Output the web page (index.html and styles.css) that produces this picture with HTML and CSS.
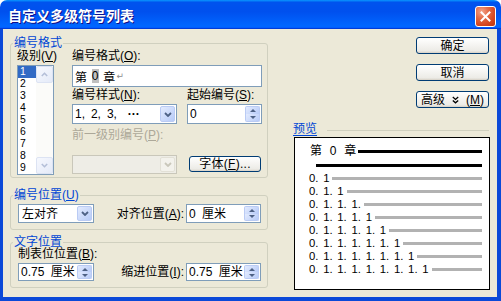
FILE: index.html
```html
<!DOCTYPE html>
<html lang="zh">
<head>
<meta charset="utf-8">
<title>自定义多级符号列表</title>
<link rel="stylesheet" href="styles.css">
</head>
<body>
<div class="window">
  <div class="titlebar">
    <span class="title">自定义多级符号列表</span>
    <span class="close"><svg width="11" height="11" viewBox="0 0 11 11"><path d="M1.5 1.5L9.5 9.5M9.5 1.5L1.5 9.5" stroke="#fff" stroke-width="2" stroke-linecap="square"/></svg></span>
  </div>
  <div class="client">
    <div class="leftcol">
      <fieldset class="group g1">
        <legend>编号格式</legend>
        <div class="g1body">
          <div class="levelcol">
            <div class="label">级别(<u>V</u>)</div>
            <div class="listbox">
              <ul class="items">
                <li class="sel">1</li><li>2</li><li>3</li><li>4</li><li>5</li><li>6</li><li>7</li><li>8</li><li>9</li>
              </ul>
              <div class="vscroll">
                <span class="sb"><svg width="7" height="5" viewBox="0 0 7 5"><polyline points="0.8,4 3.5,1.3 6.2,4" fill="none" stroke="#B4BFD8" stroke-width="1.6"/></svg></span>
                <span class="sb"><svg width="7" height="5" viewBox="0 0 7 5"><polyline points="0.8,1 3.5,3.7 6.2,1" fill="none" stroke="#B4BFD8" stroke-width="1.6"/></svg></span>
              </div>
            </div>
          </div>
          <div class="formatcol">
            <div class="label">编号格式(<u>O</u>):</div>
            <div class="edit fmt">第 <span class="fld">0</span> 章<span class="ret">↵</span></div>
            <div class="pair">
              <div class="label">编号样式(<u>N</u>):</div>
              <div class="label">起始编号(<u>S</u>):</div>
              <div class="combo h20"><span class="val">1, 2, 3, <span class="dots">···</span></span><span class="dd"><svg width="8" height="5" viewBox="0 0 8 5"><polyline points="1,1 4,4 7,1" fill="none" stroke="#4D6185" stroke-width="1.8"/></svg></span></div>
              <div class="spin h20"><span class="val">0</span><span class="spinbtns"><i class="sup"></i><i class="sdn"></i></span></div>
            </div>
            <div class="label disabled">前一级别编号(<u>P</u>):</div>
            <div class="pair2">
              <div class="combo h19 off"><span class="val"></span><span class="dd"><svg width="8" height="5" viewBox="0 0 8 5"><polyline points="1,1 4,4 7,1" fill="none" stroke="#C9C7BA" stroke-width="1.8"/></svg></span></div>
              <span class="btn fontbtn">字体(<u>F</u>)...</span>
            </div>
          </div>
        </div>
      </fieldset>

      <fieldset class="group g2">
        <legend>编号位置(<u>U</u>)</legend>
        <div class="g2body">
          <div class="combo h19"><span class="val pl3">左对齐</span><span class="dd"><svg width="8" height="5" viewBox="0 0 8 5"><polyline points="1,1 4,4 7,1" fill="none" stroke="#4D6185" stroke-width="1.8"/></svg></span></div>
          <div class="label rlabel">对齐位置(<u>A</u>):</div>
          <div class="spin h19"><span class="val ws">0 厘米</span><span class="spinbtns"><i class="sup"></i><i class="sdn"></i></span></div>
        </div>
      </fieldset>

      <fieldset class="group g3">
        <legend>文字位置</legend>
        <div class="g3body">
          <div class="label l12 span3">制表位位置(<u>B</u>):</div>
          <div class="spin h18"><span class="val ws">0.75 厘米</span><span class="spinbtns"><i class="sup"></i><i class="sdn"></i></span></div>
          <div class="label rlabel">缩进位置(<u>I</u>):</div>
          <div class="spin h18"><span class="val ws">0.75 厘米</span><span class="spinbtns"><i class="sup"></i><i class="sdn"></i></span></div>
        </div>
      </fieldset>
    </div>

    <div class="rightcol">
      <span class="btn rbtn">确定</span>
      <span class="btn rbtn mt10">取消</span>
      <span class="btn rbtn mt10 more"><span>高级</span><svg width="7" height="8" viewBox="0 0 7 8"><polyline points="0.8,1 3.5,3.4 6.2,1" fill="none" stroke="#000" stroke-width="1.3"/><polyline points="0.8,4.4 3.5,6.8 6.2,4.4" fill="none" stroke="#000" stroke-width="1.3"/></svg><span>(<u>M</u>)</span></span>
      <div class="ptitle"><span>预览</span><i></i></div>
      <div class="preview">
        <div class="phead"><span>第 0 章</span><i class="bline"></i></div>
        <i class="bline b2"></i>
        <div class="prows">
          <div class="prow"><span>0. 1</span><i></i></div>
          <div class="prow"><span>0. 1. 1</span><i></i></div>
          <div class="prow"><span>0. 1. 1. 1.</span><i></i></div>
          <div class="prow"><span>0. 1. 1. 1. 1</span><i></i></div>
          <div class="prow"><span>0. 1. 1. 1. 1. 1</span><i></i></div>
          <div class="prow"><span>0. 1. 1. 1. 1. 1. 1</span><i></i></div>
          <div class="prow"><span>0. 1. 1. 1. 1. 1. 1. 1</span><i></i></div>
          <div class="prow"><span>0. 1. 1. 1. 1. 1. 1. 1. 1</span><i></i></div>
        </div>
      </div>
    </div>
  </div>
</div>
</body>
</html>
```

FILE: styles.css
```css
* { box-sizing: border-box; }
html, body { margin: 0; padding: 0; }
body {
  width: 501px;
  height: 301px;
  overflow: hidden;
  background: #ffffff;
  font-family: "Liberation Sans", "Noto Sans CJK SC", sans-serif;
  font-size: 12px;
  color: #000;
}
u { text-decoration: underline; text-underline-offset: 1px; }

.window { width: 501px; height: 301px; display: flex; flex-direction: column; }

.titlebar {
  height: 29px;
  flex: none;
  display: flex;
  align-items: center;
  justify-content: space-between;
  padding: 1px 5px 0 8px;
  border-radius: 7px 7px 0 0;
  background: linear-gradient(180deg, #0997ff, #0053ee 8%, #0050ee 40%, #0066ff 88%, #0066ff 93%, #005bff 95%, #003dd7 96%, #003dd7);
}
.title {
  color: #fff;
  font-family: "Noto Sans CJK SC", sans-serif;
  font-weight: bold;
  font-size: 14px;
  line-height: 16px;
  text-shadow: 1px 1px #0f1089;
}
.close {
  width: 21px;
  height: 21px;
  margin-top: 2px;
  border: 1px solid #fff;
  border-radius: 3px;
  background: radial-gradient(circle at 30% 25%, #f4a68c 0, #e36a46 35%, #d4451f 70%, #b83613 100%);
  display: flex;
  align-items: center;
  justify-content: center;
}

.client {
  flex: 1;
  display: flex;
  column-gap: 25px;
  background: #ECE9D8;
  border-style: solid;
  border-color: #0B49D8;
  border-width: 0 4px 4px 3px;
  padding: 8px 7px 0 7px;
}

.leftcol { width: 258px; display: flex; flex-direction: column; }
.rightcol { width: 197px; display: flex; flex-direction: column; }

.group {
  margin: 0;
  padding: 0;
  border: 1px solid #D0D0BF;
  border-radius: 3px;
  min-inline-size: 0;
}
.group legend {
  margin-left: 2px;
  padding: 0 1px;
  color: #0046D5;
  line-height: 12px;
  font-size: 12px;
}
.g2 { margin-top: 11px; }
.g3 { margin-top: 6px; }

.label { line-height: 14px; height: 14px; white-space: nowrap; }
.l12 { line-height: 12px; height: 12px; }
.disabled { color: #ACA899; }

/* group 1 */
.g1body { display: flex; column-gap: 18px; padding: 0 5px 2px 6px; }
.levelcol { width: 37px; display: flex; flex-direction: column; row-gap: 2px; }
.formatcol { width: 190px; display: flex; flex-direction: column; }

.listbox {
  height: 110px;
  display: flex;
  border: 1px solid #7F9DB9;
  background: #fff;
}
.items { list-style: none; margin: 0; padding: 0; flex: 1; }
.items li { height: 12px; line-height: 12px; font-size: 10.4px; padding-left: 2px; overflow: hidden; }
.items li.sel { background: #316AC5; color: #fff; }
.vscroll {
  width: 17px;
  display: flex;
  flex-direction: column;
  justify-content: space-between;
  background: #FBFBF9;
}
.sb {
  height: 17px;
  border: 1px solid #DCE3F3;
  border-radius: 2px;
  background: linear-gradient(135deg, #F6F8FE, #E4EAF8);
  display: flex;
  align-items: center;
  justify-content: center;
}

.edit {
  border: 1px solid #7F9DB9;
  background: #fff;
  display: flex;
  align-items: center;
  white-space: pre;
}
.fmt { height: 22px; margin-top: 2px; padding-left: 2px; word-spacing: 1.5px; }
.fld { background: #C0C0C0; word-spacing: 0; }
.ret { color: #8C8C8C; font-family: "DejaVu Sans", sans-serif; font-size: 9px; margin-left: 1px; }

.pair {
  margin-top: 1px;
  display: grid;
  grid-template-columns: 105px 75px;
  column-gap: 10px;
  row-gap: 2px;
}
.formatcol > .disabled { margin-top: 4px; }
.pair2 {
  margin-top: 13px;
  display: grid;
  grid-template-columns: 105px 75px;
  column-gap: 10px;
  align-items: start;
}

.combo, .spin {
  border: 1px solid #7F9DB9;
  background: #fff;
  display: flex;
  align-items: center;
  white-space: nowrap;
  overflow: hidden;
}
.h20 { height: 20px; }
.h19 { height: 19px; }
.h18 { height: 18px; }
.val { flex: 1; padding-left: 2px; line-height: 14px; }
.pl3 { padding-left: 3px; }
.ws { word-spacing: 3px; }
.combo .val { word-spacing: 2.6px; }
.dots { margin-left: 5px; letter-spacing: 0; font-weight: bold; }
.dd {
  width: 15px;
  align-self: stretch;
  margin: 1px;
  border: 1px solid #BACBF4;
  border-radius: 2px;
  background: linear-gradient(135deg, #E3EBFE, #B7CBF8);
  display: flex;
  align-items: center;
  justify-content: center;
}
.off { border-color: #C9C7BA; background: #EEEDE6; }
.off .dd { border-color: #E2E0D6; background: #F3F2EC; }

.spinbtns {
  width: 15px;
  align-self: stretch;
  margin: 1px;
  display: flex;
  flex-direction: column;
}
.spinbtns i {
  flex: 1;
  border: 1px solid #BACBF4;
  background: linear-gradient(135deg, #E3EBFE, #B7CBF8);
  display: flex;
  align-items: center;
  justify-content: center;
}
.spinbtns .sup { border-radius: 2px 2px 0 0; border-bottom-width: 0; }
.spinbtns .sdn { border-radius: 0 0 2px 2px; border-top-width: 0; }
.sup::after {
  content: "";
  border-left: 3px solid transparent;
  border-right: 3px solid transparent;
  border-bottom: 3px solid #4D6185;
}
.sdn::after {
  content: "";
  border-left: 3px solid transparent;
  border-right: 3px solid transparent;
  border-top: 3px solid #4D6185;
}

.btn {
  height: 17px;
  border: 1px solid #003C74;
  border-radius: 3px;
  background: linear-gradient(180deg, #ffffff, #ecebe6 86%, #d6d0c5);
  display: flex;
  align-items: center;
  justify-content: center;
  line-height: 14px;
  white-space: nowrap;
}
.fontbtn { width: 72px; height: 16px; margin: 1px 0 0 2px; letter-spacing: 0.3px; }
.rbtn { width: 73px; align-self: flex-end; margin-right: 1px; }
.mt10 { margin-top: 10px; }
.more { column-gap: 7px; }

/* group 2 / 3 */
.g2body {
  display: grid;
  grid-template-columns: 76px 1fr 75px;
  align-items: center;
  padding: 3px 6px 6px 7px;
}
.g3body {
  display: grid;
  grid-template-columns: 76px 1fr 75px;
  align-items: center;
  row-gap: 3px;
  padding: 0 6px 6px 7px;
}
.span3 { grid-column: 1 / -1; }
.rlabel { justify-self: end; margin-right: 2px; }

/* preview */
.ptitle { display: flex; align-items: center; height: 14px; margin-top: 14px; }
.ptitle span { color: #0046D5; line-height: 14px; text-decoration: underline; text-underline-offset: 2px; }
.ptitle i { flex: 1; border-top: 1px solid #D0D0BF; margin: 2px 1px 0 10px; }
.preview {
  height: 153px;
  margin: 1px 0 0 1px;
  border: 1px solid #000;
  background: #fff;
  padding: 6px 7px 0 14px;
}
.phead { display: flex; align-items: center; height: 14px; padding-left: 1px; }
.phead span { line-height: 14px; word-spacing: 4.5px; white-space: pre; }
.bline { display: block; height: 3px; background: #000; flex: 1; margin-left: 2px; }
.b2 { margin: 6px 0 0 7px; }
.prows { margin-top: 5px; }
.prow { display: flex; align-items: center; height: 13px; }
.prow span { font-size: 11.3px; line-height: 13px; word-spacing: 1.6px; white-space: pre; }
.prow i { flex: 1; height: 3px; background: #B2B2B2; margin-left: 3px; }
```
